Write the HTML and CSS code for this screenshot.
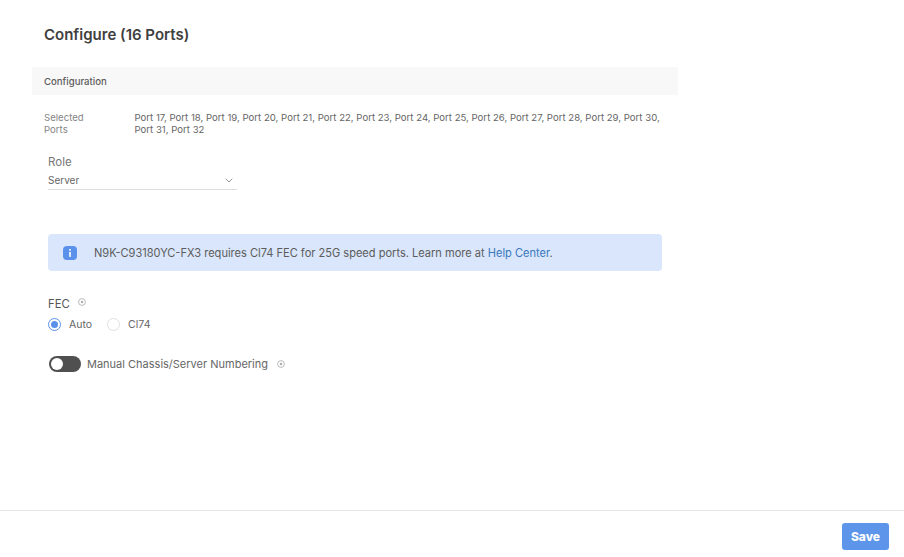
FILE: index.html
```html
<!DOCTYPE html>
<html lang="en">
<head>
<meta charset="utf-8">
<title>Configure (16 Ports)</title>
<link rel="stylesheet" href="styles.css">
</head>
<body>
<div class="page">
  <main class="content">
    <h1 class="title">Configure (16 Ports)</h1>
    <section class="panel">
      <div class="panel-head">Configuration</div>
      <div class="selected">
        <div class="selected-label">Selected Ports</div>
        <div class="selected-value">Port 17, Port 18, Port 19, Port 20, Port 21, Port 22, Port 23, Port 24, Port 25, Port 26, Port 27, Port 28, Port 29, Port 30, Port 31, Port 32</div>
      </div>
      <div class="form">
        <div class="role">
          <div class="role-label">Role</div>
          <div class="select">
            <span>Server</span>
            <svg class="chev" width="8" height="5" viewBox="0 0 8 5"><path d="M.7.7L4 4 7.3.7" fill="none" stroke="#888" stroke-width=".9"/></svg>
          </div>
        </div>
        <div class="alert">
          <span class="alert-icon"><svg width="14" height="14" viewBox="0 0 14 14"><rect width="14" height="14" rx="4" fill="#5a91ea"/><rect x="6.2" y="3" width="1.6" height="1.7" fill="#fff"/><rect x="6.2" y="5.9" width="1.6" height="5" fill="#fff"/></svg></span>
          <span class="alert-text">N9K-C93180YC-FX3 requires Cl74 FEC for 25G speed ports. Learn more at <a class="link" href="#">Help Center</a>.</span>
        </div>
        <div class="fec">
          <div class="fec-label">FEC <svg class="hint hint-fec" width="8" height="8" viewBox="0 0 8 8"><circle cx="4" cy="4" r="3.4" fill="none" stroke="#aaa" stroke-width=".8"/><circle cx="4" cy="4" r="1.2" fill="#aaa"/></svg></div>
          <div class="radios">
            <label class="radio"><span class="dot dot-on"></span>Auto</label>
            <label class="radio"><span class="dot"></span>Cl74</label>
          </div>
        </div>
        <div class="manual">
          <span class="toggle"><span class="knob"></span></span>
          <span class="manual-text">Manual Chassis/Server Numbering</span>
          <svg class="hint hint-manual" width="8" height="8" viewBox="0 0 8 8"><circle cx="4" cy="4" r="3.4" fill="none" stroke="#aaa" stroke-width=".8"/><circle cx="4" cy="4" r="1.2" fill="#aaa"/></svg>
        </div>
      </div>
    </section>
  </main>
  <footer class="footer">
    <button class="save" type="button">Save</button>
  </footer>
</div>
</body>
</html>
```
FILE: styles.css
```css
* { box-sizing: border-box; }
html, body { margin: 0; height: 100%; background: #fff; }
body { font-family: Inter, "Liberation Sans", sans-serif; color: #666; overflow: hidden; }
.page { height: 557px; display: flex; flex-direction: column; }
.content { flex: 1; padding: 0 226px 0 32px; }
.title { margin: 0; padding: 26px 0 0 12px; font-size: 15px; line-height: 18px; font-weight: 600; color: #404040; height: 67px; }
.panel-head { height: 28px; background: #f8f8f8; padding: 1px 0 0 12px; font-size: 9.6px; line-height: 28px; font-weight: 500; color: #5c5c5c; }
.selected { display: flex; padding: 17px 12px 0; font-size: 9.6px; line-height: 12px; }
.selected-label { width: 90.5px; flex: none; padding-right: 40px; color: #858585; }
.selected-value { color: #666; }
.form { padding: 20px 16px 0; }
.role-label { font-size: 11.5px; line-height: 13px; color: #777; }
.select { width: 189px; height: 19px; margin-top: 2px; display: flex; justify-content: space-between; align-items: center; padding-right: 4px; border-bottom: 1px solid #ddd; font-size: 10px; color: #666; }
.alert { height: 37px; margin-top: 44px; width: 614px; background: #d9e6fb; border-radius: 4px; display: flex; align-items: center; padding-left: 15px; font-size: 11.05px; color: #5c5c5c; }
.alert-icon { display: flex; margin-right: 17px; }
.link { color: #3a78bd; text-decoration: none; }
.fec { margin-top: 27px; }
.fec-label { font-size: 11.3px; line-height: 13px; color: #555; display: flex; align-items: center; }
.hint-fec { margin: -2px 0 4px 8px; }
.radios { display: flex; margin-top: 7px; font-size: 10.5px; line-height: 13px; }
.radio { display: flex; align-items: center; color: #666; margin-right: 15px; }
.dot { width: 13px; height: 13px; border-radius: 50%; border: 1px solid #e0e0e0; margin-right: 8px; background: #fff; }
.dot-on { border-color: #5a91ea; position: relative; }
.dot-on::after { content: ""; position: absolute; left: 2px; top: 2px; width: 7px; height: 7px; border-radius: 50%; background: #5a91ea; }
.manual { display: flex; align-items: center; margin-top: 25px; padding-left: 1px; font-size: 11px; }
.toggle { width: 32px; height: 16px; border-radius: 8px; background: #505050; padding: 2px; margin-right: 6px; }
.knob { display: block; width: 12px; height: 12px; border-radius: 50%; background: #fff; }
.manual-text { color: #666; }
.hint-manual { margin-left: 9px; }
.footer { height: 47px; border-top: 1px solid #e6e6e6; display: flex; justify-content: flex-end; align-items: flex-start; padding: 12px 15px 0 0; }
.save { width: 47px; height: 27px; border: 0; border-radius: 3px; background: #5c95e9; color: #fff; font: 800 12px Inter, "Liberation Sans", sans-serif; padding: 0; }
```
